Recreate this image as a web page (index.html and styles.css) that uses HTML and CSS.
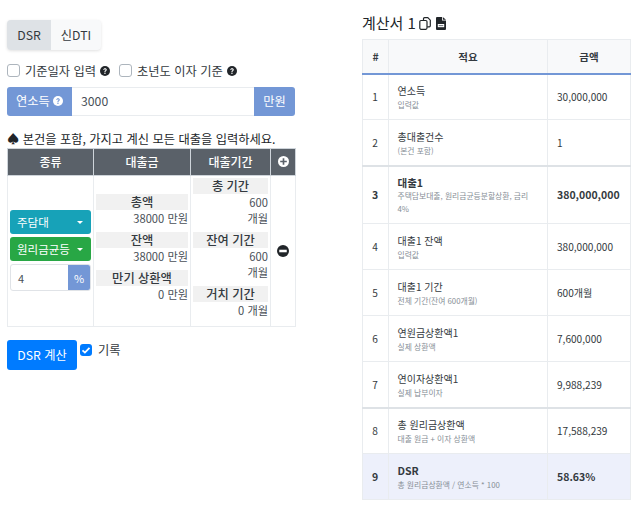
FILE: index.html
```html
<!DOCTYPE html>
<html lang="ko">
<head>
<meta charset="utf-8">
<title>DSR</title>
<link rel="stylesheet" href="styles.css">
</head>
<body>
<div class="page">
  <section class="left">
    <div class="tabs"><span class="tab active">DSR</span><span class="tab">신DTI</span></div>
    <div class="checks">
      <span class="box"></span><span class="check-label">기준일자 입력</span>
      <svg class="help" viewBox="0 0 16 16"><circle cx="8" cy="8" r="8" fill="#212529"/><path d="M5.2 6.200C5.300 4.500 6.500 3.600 8 3.600c1.700 0 2.800.9 2.800 2.300 0 2-2 1.900-2 3.500H7.100c0-2.400 2-2.300 2-3.400 0-.5-.4-.9-1.100-.9-.7 0-1.100.4-1.200 1z" fill="#fff"/><circle cx="7.900" cy="11.700" r="1.200" fill="#fff"/></svg>
      <span class="box second"></span><span class="check-label">초년도 이자 기준</span>
      <svg class="help" viewBox="0 0 16 16"><circle cx="8" cy="8" r="8" fill="#212529"/><path d="M5.2 6.200C5.300 4.500 6.500 3.600 8 3.600c1.700 0 2.800.9 2.800 2.300 0 2-2 1.900-2 3.500H7.100c0-2.400 2-2.300 2-3.400 0-.5-.4-.9-1.100-.9-.7 0-1.100.4-1.200 1z" fill="#fff"/><circle cx="7.900" cy="11.700" r="1.200" fill="#fff"/></svg>
    </div>
    <div class="income">
      <span class="addon first">연소득
        <svg class="help" viewBox="0 0 16 16"><circle cx="8" cy="8" r="8" fill="#fff"/><path d="M5.2 6.200C5.300 4.500 6.500 3.600 8 3.600c1.700 0 2.800.9 2.800 2.300 0 2-2 1.900-2 3.500H7.100c0-2.400 2-2.300 2-3.400 0-.5-.4-.9-1.100-.9-.7 0-1.100.4-1.200 1z" fill="#7397d6"/><circle cx="7.900" cy="11.700" r="1.200" fill="#7397d6"/></svg>
      </span>
      <span class="field">3000</span>
      <span class="addon last">만원</span>
    </div>
    <p class="notice">♠ 본건을 포함, 가지고 계신 모든 대출을 입력하세요.</p>
    <table class="loans">
      <colgroup><col class="c1"><col class="c2"><col class="c3"><col class="c4"></colgroup>
      <thead>
        <tr>
          <th>종류</th><th>대출금</th><th>대출기간</th>
          <th><svg class="round" viewBox="0 0 16 16"><circle cx="8" cy="8" r="8" fill="#fff"/><path d="M6.800 3.200h2.400v3.600h3.600v2.400H9.200v3.600H6.800V9.200H3.200V6.800h3.600z" fill="#5a6169"/></svg></th>
        </tr>
      </thead>
      <tbody>
        <tr>
          <td class="kind">
            <div class="select teal"><span>주담대</span><i class="caret"></i></div>
            <div class="select green"><span>원리금균등</span><i class="caret"></i></div>
            <div class="rate"><span class="rate-value">4</span><span class="rate-unit">%</span></div>
          </td>
          <td class="stack">
            <div class="lab">총액</div><div class="val">38000 만원</div>
            <div class="lab">잔액</div><div class="val">38000 만원</div>
            <div class="lab">만기 상환액</div><div class="val">0 만원</div>
          </td>
          <td class="stack">
            <div class="lab">총 기간</div><div class="val">600<br>개월</div>
            <div class="lab">잔여 기간</div><div class="val">600<br>개월</div>
            <div class="lab">거치 기간</div><div class="val">0 개월</div>
          </td>
          <td class="remove"><svg class="round dark" viewBox="0 0 16 16"><circle cx="8" cy="8" r="8" fill="#212529"/><rect x="3" y="6.300" width="10" height="3.400" fill="#fff"/></svg></td>
        </tr>
      </tbody>
    </table>
    <div class="actions">
      <span class="calc">DSR 계산</span>
      <span class="tick"><svg viewBox="0 0 12 12"><path d="M2.500 6.300l2.400 2.300 4.600-4.800" fill="none" stroke="#fff" stroke-width="1.800"/></svg></span>
      <span class="record">기록</span>
    </div>
  </section>
  <section class="right">
    <h2 class="title">계산서 1
      <svg class="t-icon" viewBox="0 0 12 13"><path d="M4.500 3.500V1.700a1 1 0 0 1 1-1h3.300L11.300 3.200v5.600a1 1 0 0 1-1 1H8.200" fill="none" stroke="#212529" stroke-width="1.200"/><rect x=".8" y="3.500" width="7.200" height="8.800" rx="1.200" fill="#fff" stroke="#212529" stroke-width="1.200"/></svg>
      <svg class="t-icon doc" viewBox="0 0 10 13"><path d="M0 1a1 1 0 0 1 1-1h5v3.500h4V12a1 1 0 0 1-1 1H1a1 1 0 0 1-1-1z" fill="#212529"/><path d="M6.800 0L10 2.800H6.800z" fill="#212529"/><rect x="1.800" y="7" width="6.400" height="3.200" fill="#fff"/><rect x="2.700" y="8.200" width="4.600" height=".9" fill="#5a6169"/></svg>
    </h2>
    <table class="bill">
      <colgroup><col class="n"><col class="d"><col class="a"></colgroup>
      <thead><tr><th>#</th><th>적요</th><th>금액</th></tr></thead>
      <tbody>
        <tr class="r46"><td class="num">1</td><td><div class="main">연소득</div><div class="sub">입력값</div></td><td class="amt">30,000,000</td></tr>
        <tr class="r46"><td class="num">2</td><td><div class="main">총대출건수</div><div class="sub">(본건 포함)</div></td><td class="amt">1</td></tr>
        <tr class="group strong loan"><td class="num">3</td><td><div class="main">대출1</div><div class="sub">주택담보대출, 원리금균등분할상환, 금리 4%</div></td><td class="amt">380,000,000</td></tr>
        <tr class="r46"><td class="num">4</td><td><div class="main">대출1 잔액</div><div class="sub">입력값</div></td><td class="amt">380,000,000</td></tr>
        <tr class="r46"><td class="num">5</td><td><div class="main">대출1 기간</div><div class="sub">전체 기간(잔여 600개월)</div></td><td class="amt">600개월</td></tr>
        <tr class="r46"><td class="num">6</td><td><div class="main">연원금상환액1</div><div class="sub">실제 상환액</div></td><td class="amt">7,600,000</td></tr>
        <tr class="r46"><td class="num">7</td><td><div class="main">연이자상환액1</div><div class="sub">실제 납부이자</div></td><td class="amt">9,988,239</td></tr>
        <tr class="r46 group"><td class="num">8</td><td><div class="main">총 원리금상환액</div><div class="sub">대출 원금 + 이자 상환액</div></td><td class="amt">17,588,239</td></tr>
        <tr class="r46 strong total"><td class="num">9</td><td><div class="main">DSR</div><div class="sub">총 원리금상환액 / 연소득 * 100</div></td><td class="amt">58.63%</td></tr>
      </tbody>
    </table>
  </section>
</div>
</body>
</html>
```

FILE: styles.css
```css
* { box-sizing: border-box; }
html, body { margin: 0; padding: 0; }
body {
  font-family: "Noto Sans CJK KR", "Noto Sans", sans-serif;
  color: #212529;
  background: #fff;
  font-size: 12.25px;
}
.page { display: flex; align-items: flex-start; padding: 12px 5px 0 7px; }
.left { width: 288px; flex: none; padding-top: 8px; }
.right { width: 269px; flex: none; margin-left: 67px; }

.tabs { display: inline-flex; height: 29.5px; border-radius: 4px; box-shadow: 0 1px 3px rgba(0,0,0,.12); overflow: hidden; background: #f8f9fa; vertical-align: top; }
.tab { display: flex; align-items: center; justify-content: center; color: #343a40; width: 50px; }
.tab.active { background: #dee2e6; width: 44px; }

.checks { display: flex; align-items: center; height: 20px; margin-top: 11px; }
.box { width: 12.500px; height: 13px; border: 1px solid #adb5bd; border-radius: 3px; background: #fff; margin-right: 5.500px; }
.box.second { margin-left: 9px; }
.check-label { color: #343a40; margin-right: 4px; }
.help { width: 10px; height: 10px; }

.income { display: flex; height: 29px; margin-top: 6px; }
.addon { display: flex; align-items: center; background: #7397d6; color: #fff; padding: 0 9px; gap: 3px; }
.addon.first { border-radius: 3px 0 0 3px; width: 65px; }
.addon.last { border-radius: 0 3px 3px 0; width: 41px; justify-content: center; padding: 0; }
.field { flex: 1; display: flex; align-items: center; padding-left: 9px; border-top: 1px solid #e9ecef; border-bottom: 1px solid #e9ecef; color: #495057; }

.notice { margin: 14px 0 0; line-height: 18px; color: #212529; }

.loans { width: 288px; table-layout: fixed; border-collapse: collapse; }
.c1 { width: 86px; } .c2 { width: 97px; } .c3 { width: 80px; } .c4 { width: 25px; }
.loans th { height: 27px; background: #5a6169; color: #fff; font-size: 12px; font-weight: 500; border: 1px solid #ced4da; padding: 0; text-align: center; }
.loans td { border: 1px solid #e9ecef; padding: 0; height: 150px; }
.round { width: 11px; height: 11px; display: block; margin: auto; }
.round.dark { width: 12px; height: 12px; }
.kind { padding: 0 2px !important; }
.select { height: 24px; border-radius: 3px; display: flex; align-items: center; justify-content: space-between; padding: 0 8px 0 7px; color: #fff; font-size: 11.500px; margin-bottom: 3px; }
.teal { background: #17a2b8; }
.green { background: #28a745; }
.caret { width: 0; height: 0; border: 3px solid transparent; border-top: 3px solid #fff; border-bottom: 0; }
.rate { display: flex; height: 27px; border: 1px solid #e0e3e7; border-radius: 3px; overflow: hidden; font-size: 11px; }
.rate-value { flex: 1; padding-left: 7px; display: flex; align-items: center; color: #495057; }
.rate-unit { width: 22px; display: flex; align-items: center; justify-content: center; background: #7397d6; color: #fff; }
.stack { padding: 2px !important; vertical-align: middle; }
.lab { background: #f1f1f1; text-align: center; font-weight: 500; font-size: 12.250px; line-height: 16px; color: #343a40; }
.val { text-align: right; font-size: 11.200px; line-height: 16px; color: #495057; margin: 0 0 6px; }

.actions { display: flex; align-items: flex-start; margin-top: 13.500px; }
.calc { width: 70px; height: 30px; background: #007bff; color: #fff; border-radius: 3px; display: flex; align-items: center; justify-content: center; }
.tick { width: 12px; height: 12px; background: #007bff; border-radius: 3px; margin: 3.500px 0 0 3px; display: block; }
.tick svg { display: block; }
.record { margin: 1px 0 0 6px; color: #343a40; }

.title { margin: 0; font-size: 15px; font-weight: 400; height: 27px; line-height: 22px; display: flex; align-items: flex-start; gap: 4px; color: #212529; }
.t-icon { width: 12px; height: 13px; margin-top: 5px; margin-left: -1px; }
.t-icon.doc { width: 10px; margin-left: 1px; }
.bill { width: 268px; table-layout: fixed; border-collapse: collapse; font-size: 10.100px; }
.n { width: 26px; } .d { width: 159px; } .a { width: 83px; }
.bill th { height: 34px; background: #f8f9fa; border: 1px solid #e9ecef; border-bottom: 2px solid #7397d6; font-size: 10.500px; font-weight: 700; color: #343a40; padding: 0; }
.bill td { border: 1px solid #e9ecef; padding: 1px 12px 0 8.500px; color: #343a40; vertical-align: middle; }
.bill .num { text-align: center; padding: 0 1px 0 0; }
.bill .amt { padding: 0 0 0 9px; }
.r46 td { height: 46px; }
.main { font-size: 10px; line-height: 15px; color: #343a40; }
.sub { font-size: 7.800px; line-height: 13px; color: #868e96; }
.group td { border-top: 2px solid #dee2e6; }
.strong td { height: 58px; font-weight: 700; font-size: 10.500px; }
.strong .main { font-size: 10.500px; font-weight: 700; }
.loan .main { line-height: 13px; }
.strong .sub { font-weight: 400; }
.total td { height: 46px; background: #edf0fb; }
```
